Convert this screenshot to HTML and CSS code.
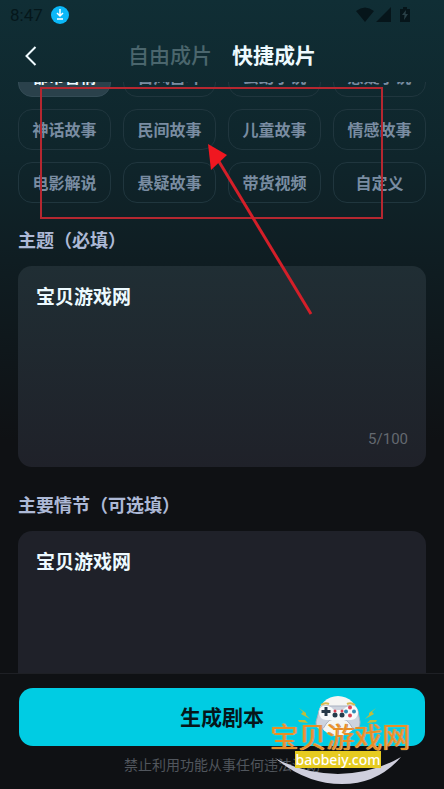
FILE: index.html
```html
<!DOCTYPE html>
<html lang="zh-CN">
<head>
<meta charset="utf-8">
<meta name="viewport" content="width=device-width, initial-scale=1">
<title>快捷成片</title>
<link rel="stylesheet" href="styles.css">
</head>
<body>
<div class="app">
  <div class="status">
    <span class="time">8:47</span>
    <svg class="download" viewBox="0 0 18 18" aria-hidden="true"><circle cx="9" cy="9" r="9" fill="#0bb8f8"/><path d="M9 3v7M6 7l3 3 3-3M6 13h6" fill="none" stroke="#fff" stroke-width="1.500"/></svg>
    <svg class="signals" viewBox="0 0 56 18" aria-hidden="true"><path d="M0 5Q9-2 18 5L9 16zM20 16L35 1v15zM44 3h3V1h4v2h3v13H44z" fill="#06151a"/><path d="M50 4l-4 5h2.500L48 14l4-6h-2.500z" fill="#294047"/></svg>
  </div>
  <header class="header">
    <button class="back" type="button" aria-label="返回"><svg viewBox="0 0 12 20" aria-hidden="true"><path d="M10.500 1L1.500 10l9 9" fill="none" stroke="#f0fbff" stroke-width="2"/></svg></button>
    <nav class="tabs"><a href="#free" class="tab">自由成片</a><a href="#quick" class="tab active">快捷成片</a></nav>
  </header>
  <main class="content">
    <div class="chips">
      <button type="button" class="chip selected">都市言情</button><button type="button" class="chip">古风宫斗</button><button type="button" class="chip">玄幻小说</button><button type="button" class="chip">悬疑小说</button>
      <button type="button" class="chip">神话故事</button><button type="button" class="chip">民间故事</button><button type="button" class="chip">儿童故事</button><button type="button" class="chip">情感故事</button>
      <button type="button" class="chip">电影解说</button><button type="button" class="chip">悬疑故事</button><button type="button" class="chip">带货视频</button><button type="button" class="chip">自定义</button>
    </div>
    <label class="label" for="topic">主题（必填）</label>
    <div class="field"><textarea id="topic" maxlength="100">宝贝游戏网</textarea><span class="count">5/100</span></div>
    <label class="label" for="plot">主要情节（可选填）</label>
    <div class="field plain"><textarea id="plot">宝贝游戏网</textarea></div>
  </main>
  <footer class="footer">
    <button type="button" class="submit">生成剧本</button>
    <p class="notice">禁止利用功能从事任何违法活动</p>
    <div class="brand">
      <svg class="brand-art" viewBox="0 0 140 92" aria-hidden="true">
        <path d="M5 63Q32 78 68 79Q104 78 131 62Q108 89 72 89Q36 89 5 63z" fill="#cfcfdd"/>
        <circle cx="68" cy="21" r="20" fill="#f5f5f3"/>
        <path d="M49 16Q50 9 59 11h18q9-2 11 5l2 11q0 7-5 7-3 0-5-5-3-5-8-5h-8q-5 0-8 5-2 5-5 5-5 0-5-7z" fill="#cdd3de" stroke="#aab2c1" stroke-width="1"/>
        <path d="M49 17q1-8 9-6 4 1 6 4h9q2-3 6-4 8-2 9 6 0 7-7 8H56q-7-1-7-8z" fill="#f8fafb"/>
        <path d="M56 12v9M51.500 16.500h9" stroke="#263848" stroke-width="3"/>
        <g fill="#df4354"><circle cx="80" cy="12.500" r="2"/><circle cx="80" cy="20.500" r="2"/></g><g fill="#328bb4"><circle cx="76" cy="16.500" r="2"/><circle cx="84" cy="16.500" r="2"/></g>
        <g fill="#243b4b"><circle cx="65" cy="20" r="2.500"/><circle cx="72" cy="20" r="2.500"/></g><g fill="#df4354"><circle cx="65" cy="16" r="1.500"/><circle cx="72" cy="16" r="1.500"/></g>
        <path d="M51 10q4-3 8-1M77 9q4-2 8 1" stroke="#d8b84f" stroke-width="2" fill="none"/>
        <path d="M29 13l7 5v2l4 4-9-5 2-2zM28 25h7l3 3-9-1zM106 13l-7 5v2l-4 4 9-5-2-2zM107 25h-7l-3 3 9-1z" fill="#c0bd3b"/>
      </svg>
      <span class="brand-name">宝贝游戏网</span>
      <span class="brand-url">baobeiy.com</span>
    </div>
  </footer>
  <svg class="annotation" viewBox="0 0 344 230" aria-hidden="true"><path d="M1 1h341v130H1z" fill="none" stroke="#b52730" stroke-width="2"/><path d="M175 68l96 159" stroke="#d41f29" stroke-width="3"/><path d="M168 57l19 11-16 15z" fill="#f01720"/></svg>
</div>
</body>
</html>
```

FILE: styles.css
```css
* { box-sizing: border-box; }
body { margin: 0; font-family: Roboto, "Noto Sans CJK SC", sans-serif; background: #0f1114; }
button, textarea { font: inherit; }
.app { position: relative; height: 100vh; display: flex; flex-direction: column; overflow: hidden; background: linear-gradient(#102e35 0, #0f252b 160px, #0f1d22 260px, #0f1114 440px); }
.status { height: 30px; flex: none; display: flex; align-items: center; padding: 0 32px 0 10px; gap: 8px; }
.time { font-size: 17px; color: #05171b; }
.download { width: 18px; height: 18px; }
.signals { width: 56px; height: 18px; margin-left: auto; }
.header { position: relative; height: 52px; flex: none; display: flex; align-items: flex-start; justify-content: center; }
.back { position: absolute; left: 18px; top: 10px; width: 26px; height: 32px; padding: 6px 7px; border: 0; background: none; }
.back svg { display: block; width: 12px; height: 20px; }
.tabs { display: flex; gap: 20px; font-size: 21px; line-height: 52px; font-weight: 500; }
.tab { color: #4b666d; text-decoration: none; }
.tab.active { color: #edfaff; font-weight: 700; }
.content { flex: 1; min-height: 0; overflow: hidden; padding: 0 18px; }
.chips { display: grid; grid-template-columns: repeat(4, 1fr); gap: 12px; margin-top: -26px; }
.chip { height: 41px; padding: 0 0 2px; border: 1px solid #20363e; border-radius: 14px; background: none; color: #798ca1; font-size: 16px; font-weight: 700; white-space: nowrap; }
.chip.selected { color: #edfaff; background: #2a414b; border-color: #344c56; }
.label { display: block; margin: 24px 0 11px; line-height: 28px; font-size: 18px; font-weight: 700; color: #adb9d6; }
.field { position: relative; height: 201px; border-radius: 14px; background: linear-gradient(#202e34, #1f2129); }
.field + .label { margin-top: 25px; }
.field.plain { background: #1f2129; }
.field textarea { display: block; width: 100%; height: 100%; padding: 18px; border: 0; outline: 0; resize: none; background: none; color: #edfaff; font-size: 19px; font-weight: 700; line-height: 28px; }
.count { position: absolute; right: 18px; bottom: 18px; font-size: 15px; line-height: 20px; color: #646970; }
.footer { position: relative; height: 116px; flex: none; padding: 14px 19px 0; border-top: 1px solid #1e2025; background: #0f1114; text-align: center; }
.submit { display: block; width: 100%; height: 58px; padding: 0 0 2px; border: 0; border-radius: 14px; background: #00cce3; color: #06171b; font-size: 21px; font-weight: 700; }
.notice { margin: 9px 0 0; font-size: 14px; line-height: 20px; color: #51565d; }
.brand { position: absolute; right: 34px; bottom: 0; width: 140px; height: 94px; }
.brand-art { position: absolute; left: 0; top: 0; width: 140px; height: 92px; }
.brand-name { position: absolute; inset: 26px 0 auto; font-size: 28px; line-height: 36px; color: #e98e25; white-space: nowrap; text-shadow: 0 0 1px #fff0b0, 1px 0 0 #b9752c; }
.brand-url { position: absolute; left: 25px; top: 56px; width: 86px; font-family: "Noto Sans", sans-serif; font-size: 14px; font-weight: 500; line-height: 17px; color: #fff; background: #e6cb20; }
.annotation { position: absolute; left: 40px; top: 87px; width: 344px; height: 230px; pointer-events: none; }
```
